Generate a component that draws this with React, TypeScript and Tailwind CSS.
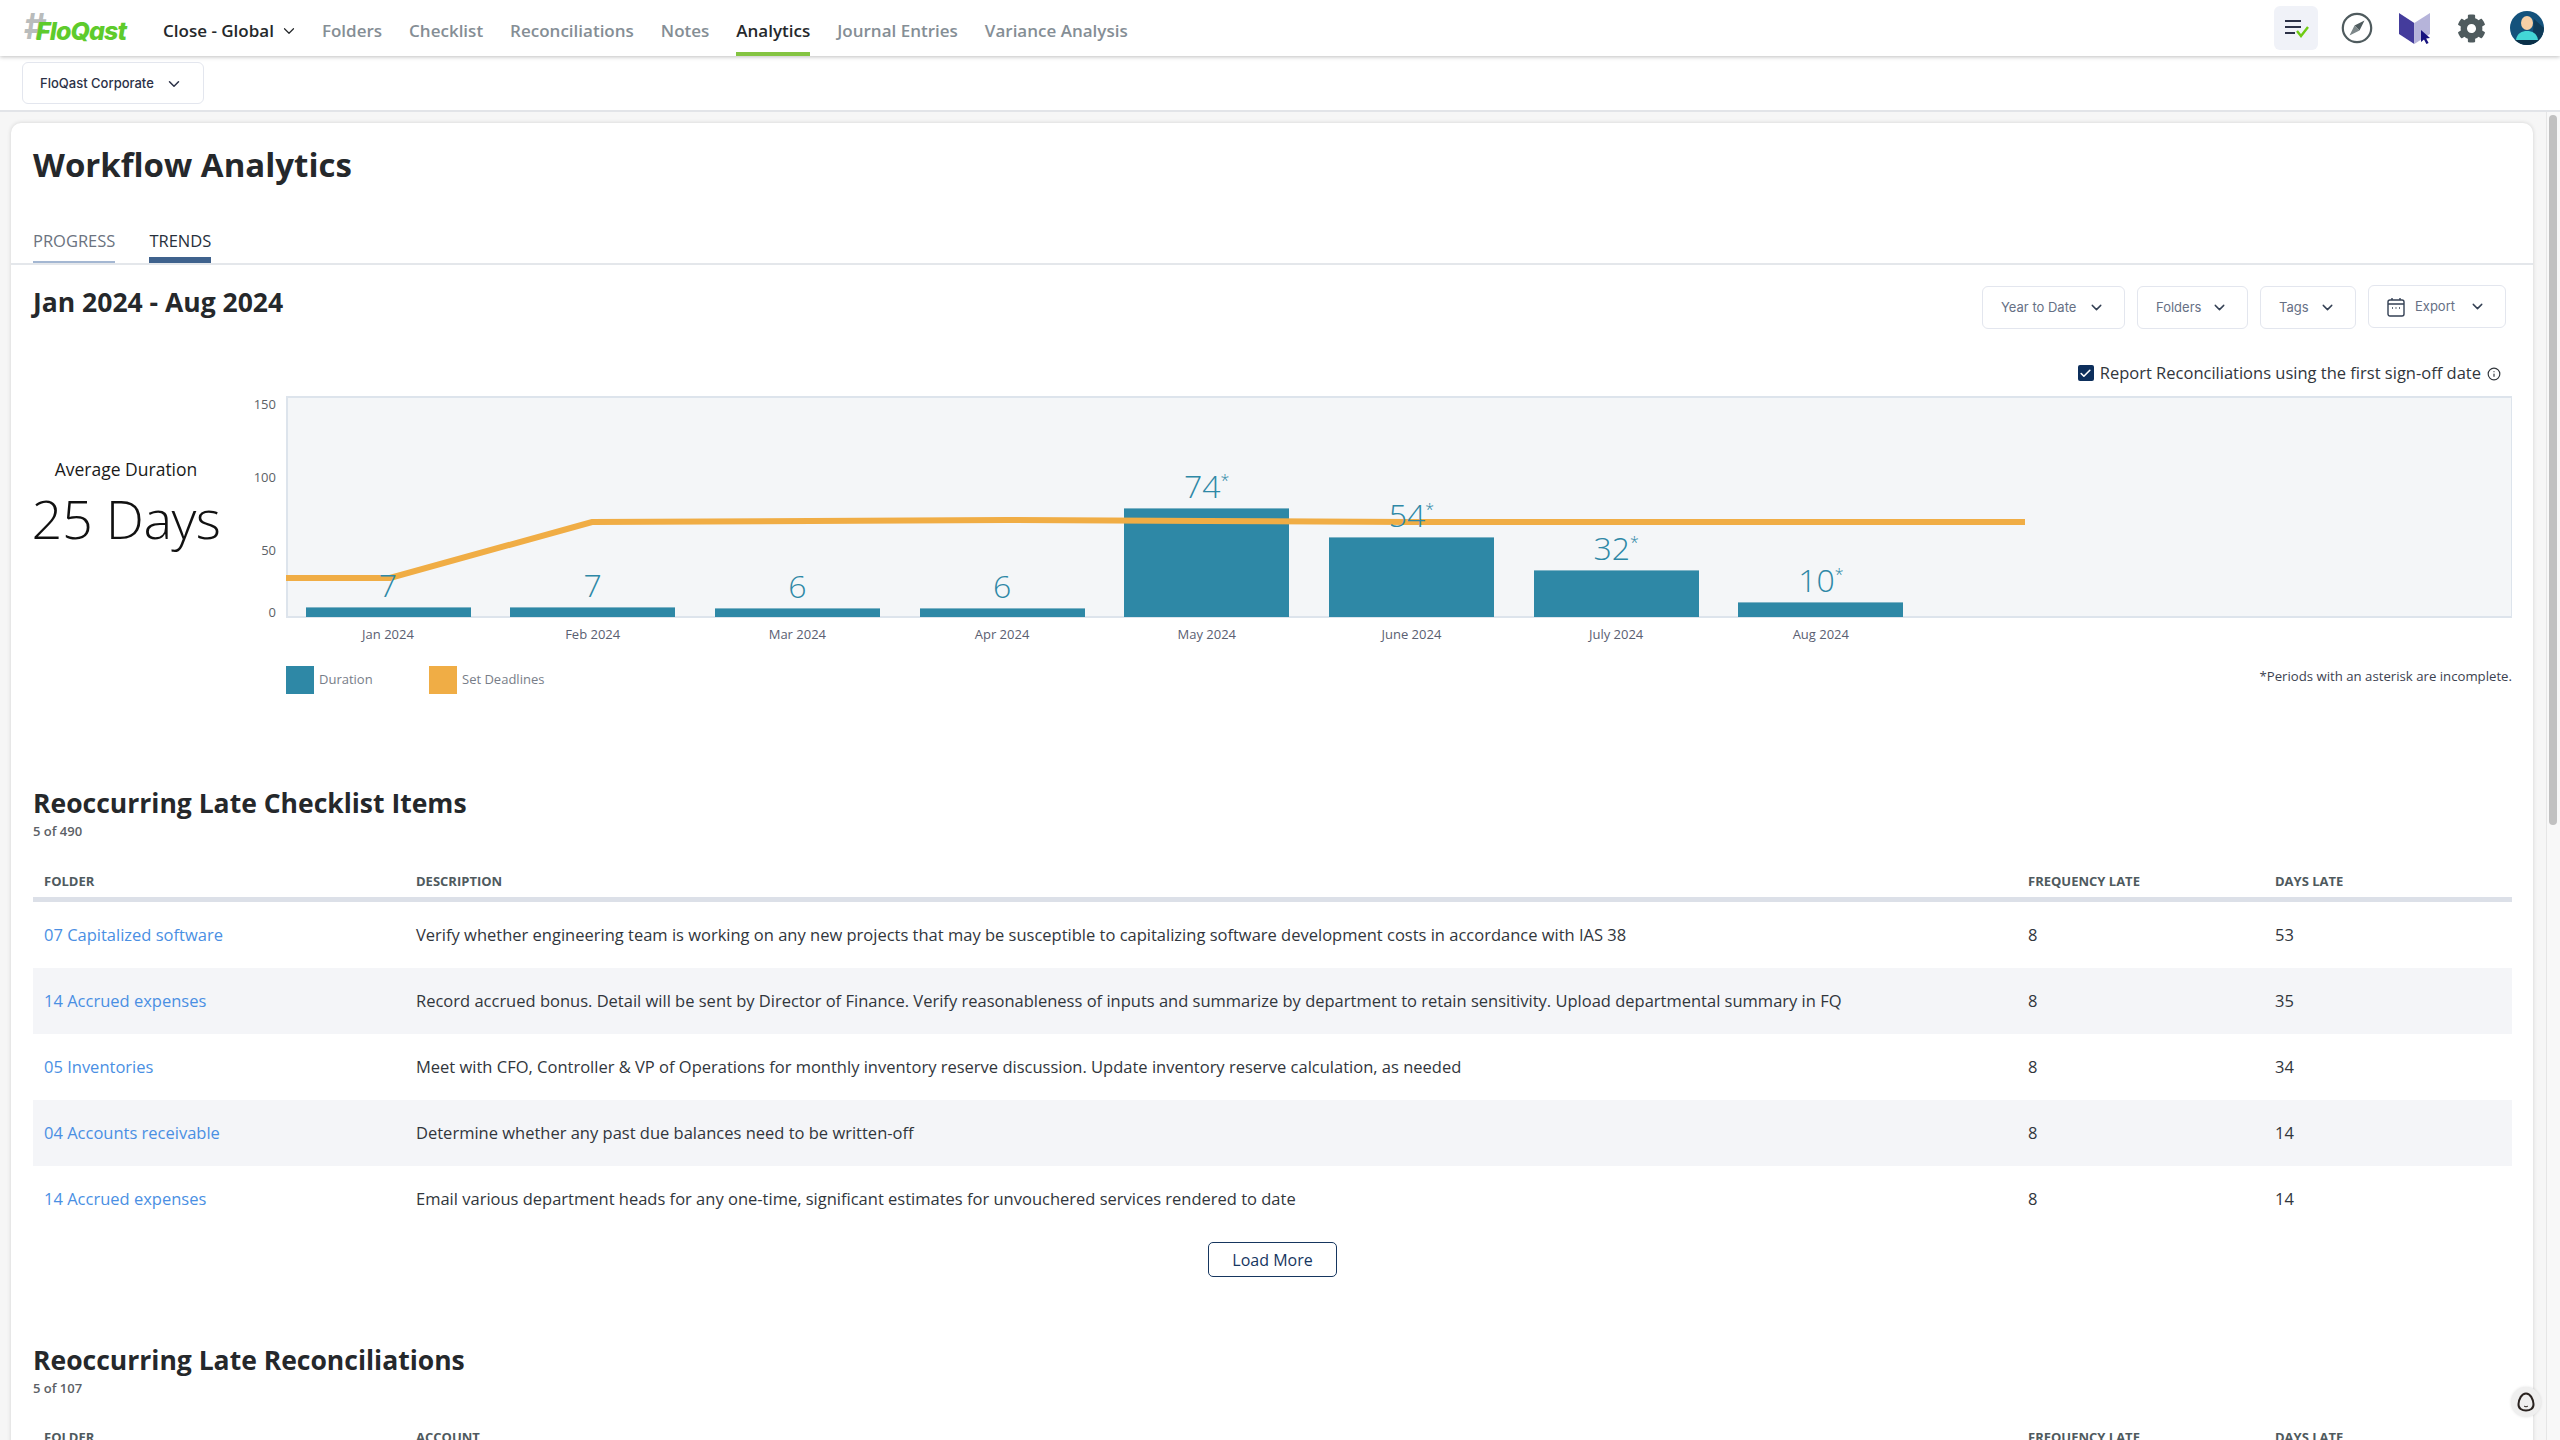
import React from 'react';
import { ChevronDown, Check, Info } from 'lucide-react';
import { FaCog } from 'react-icons/fa';

const navItems = ['Folders', 'Checklist', 'Reconciliations', 'Notes', 'Analytics', 'Journal Entries', 'Variance Analysis'];

const bars = [
  { month: 'Jan 2024', value: '7', height: 10 },
  { month: 'Feb 2024', value: '7', height: 10 },
  { month: 'Mar 2024', value: '6', height: 9 },
  { month: 'Apr 2024', value: '6', height: 9 },
  { month: 'May 2024', value: '74', height: 109, partial: true },
  { month: 'June 2024', value: '54', height: 80, partial: true },
  { month: 'July 2024', value: '32', height: 47, partial: true },
  { month: 'Aug 2024', value: '10', height: 15, partial: true },
];

const lateItems = [
  { folder: '07 Capitalized software', text: 'Verify whether engineering team is working on any new projects that may be susceptible to capitalizing software development costs in accordance with IAS 38', freq: 8, days: 53 },
  { folder: '14 Accrued expenses', text: 'Record accrued bonus. Detail will be sent by Director of Finance. Verify reasonableness of inputs and summarize by department to retain sensitivity. Upload departmental summary in FQ', freq: 8, days: 35 },
  { folder: '05 Inventories', text: 'Meet with CFO, Controller & VP of Operations for monthly inventory reserve discussion. Update inventory reserve calculation, as needed', freq: 8, days: 34 },
  { folder: '04 Accounts receivable', text: 'Determine whether any past due balances need to be written-off', freq: 8, days: 14 },
  { folder: '14 Accrued expenses', text: 'Email various department heads for any one-time, significant estimates for unvouchered services rendered to date', freq: 8, days: 14 },
];

const gridCols = 'grid grid-cols-[383px_1612px_247px_1fr]';

function FilterButton({ label, icon, width }: { label: string; icon?: React.ReactNode; width: string }) {
  return (
    <button className={`${width} h-[43px] flex items-center pl-[18px] bg-white border border-[#e3e6ee] rounded-[6px] font-['Inter'] text-[13px] text-[#667085]`}>
      {icon}
      <span className="flex-1 text-left">{label}</span>
      <ChevronDown className="mr-[19px] w-[17px] h-[17px] text-[#344054]" strokeWidth={2} />
    </button>
  );
}

function TableHead({ second }: { second: string }) {
  return (
    <div className={`${gridCols} text-[13px] leading-[16px] font-bold text-[#4f5a5e]`}>
      <div className="pl-[11px]">FOLDER</div>
      <div>{second}</div>
      <div>FREQUENCY LATE</div>
      <div>DAYS LATE</div>
    </div>
  );
}

function Logo() {
  return (
    <div className="relative w-[102px] h-[30px] ml-[24px] shrink-0 font-['Inter']">
      <span className="absolute left-0 top-[-5px] text-[35px] leading-[36px] font-bold text-[#b9bcbc]">#</span>
      <span className="absolute left-[12px] top-[3px] text-[25px] leading-[30px] font-extrabold italic tracking-[-0.9px] text-[#5ecb2c]">FloQast</span>
    </div>
  );
}

function CompassIcon() {
  return (
    <svg width="32" height="32" viewBox="0 0 32 32" fill="none">
      <circle cx="16" cy="16" r="14.2" stroke="#4f5b5e" strokeWidth="2.2" />
      <path d="M23.5 8.5 L18.5 18.5 L13.5 13.5 Z" fill="#4f5b5e" />
      <path d="M8.5 23.5 L13.5 13.5 L18.5 18.5 Z" fill="#7d8789" />
    </svg>
  );
}

function BookIcon() {
  return (
    <svg width="34" height="32" viewBox="0 0 34 32">
      <path d="M0 0 L15.3 10 L15.3 31 L0 21 Z" fill="#443c9c" />
      <path d="M15.3 10 L31 0 L31 21 L15.3 31 Z" fill="#b6b4da" />
      <path d="M22 17 L22 29 L25 26.4 L27.4 31 L29.6 30 L27.2 25.4 L31 25 Z" fill="#17127f" />
    </svg>
  );
}

function AvatarIcon() {
  return (
    <svg width="34" height="34" viewBox="0 0 34 34">
      <defs>
        <clipPath id="avatarClip">
          <circle cx="17" cy="17" r="17" />
        </clipPath>
      </defs>
      <g clipPath="url(#avatarClip)">
        <rect width="34" height="34" fill="#14527c" />
        <path d="M24 8 L34 17 L34 34 L22 34 Z" fill="#0f3b58" />
        <rect y="29" width="34" height="5" fill="#0a3048" />
        <path d="M6 29 C7 22 12 20 17 20 C22 20 27 22 28 29 Z" fill="#43d6d6" />
        <ellipse cx="17" cy="12" rx="6" ry="7" fill="#f7d0a6" />
      </g>
    </svg>
  );
}

function TopBar() {
  return (
    <header className="relative z-10 h-14 shrink-0 flex items-center bg-white shadow-[0_1px_4px_rgba(0,0,0,0.25)]">
      <Logo />
      <div className="ml-[37px] flex items-center h-full text-[17px] font-semibold">
        <div className="flex items-center pt-[6px] text-[#25282b]">
          Close - Global
          <ChevronDown className="ml-[6px] w-[18px] h-[18px]" strokeWidth={1.6} />
        </div>
        <nav className="ml-[24px] flex h-full gap-[27px] text-[#858e95]">
          {navItems.map((item) => (
            <a
              key={item}
              className={`h-full pt-[6px] flex items-center border-y-4 border-t-transparent ${
                item === 'Analytics' ? 'border-b-[#84c441] text-[#25282b]' : 'border-b-transparent'
              }`}
            >
              {item}
            </a>
          ))}
        </nav>
      </div>
      <div className="ml-auto mr-[16px] flex items-center">
        <div className="w-[44px] h-[44px] mr-[4px] rounded-[6px] bg-[#f0f2f8] flex items-center justify-center">
          <svg width="28" height="24" viewBox="0 0 28 24" fill="none">
            <path d="M3 5 H19 M3 11 H19 M3 17 H13" stroke="#2b3147" strokeWidth="2.2" />
            <path d="M15 15 L19 20 L26 11" stroke="#6fcb13" strokeWidth="2.4" />
          </svg>
        </div>
        <div className="ml-[19px]"><CompassIcon /></div>
        <div className="ml-[26px] mt-[2px]"><BookIcon /></div>
        <FaCog className="ml-[24px] w-[29px] h-[29px] text-[#4f5b5e]" />
        <div className="ml-[24px]"><AvatarIcon /></div>
      </div>
    </header>
  );
}

function TrendChart() {
  return (
    <div className="flex">
      <div className="w-[186px] pt-[61px] flex flex-col items-center shrink-0">
        <div className="text-[17.5px] leading-[24px] text-[#1a1a1a]">Average Duration</div>
        <div className="mt-[1px] text-[54px] leading-[72px] font-light tracking-[-0.5px] text-[#111] whitespace-nowrap">25 Days</div>
      </div>
      <div className="w-[57px] shrink-0 text-right text-[13px] leading-[16px] text-[#5c6166]">
        <div>150</div>
        <div className="mt-[57px]">100</div>
        <div className="mt-[57px]">50</div>
        <div className="mt-[46px]">0</div>
      </div>
      <div className="ml-[10px] flex-1">
        <div className="relative h-[222px] bg-[#f4f6f8] border-y-2 border-l-2 border-r border-[#dde4ec] flex items-end gap-[39.7px] pl-[17.5px]">
          {bars.map((bar) => (
            <div key={bar.month} className="w-[165px] flex flex-col items-center -mb-px">
              <div className="relative z-[2] h-[36px] mb-[4px] text-[32px] leading-[36px] font-light text-[#2e88a6] flex">
                {bar.value}
                {bar.partial && <span className="text-[16px] leading-[24px]">*</span>}
              </div>
              <div
                className="w-full bg-[#2e88a6] border-t border-[#7fb4c6]"
                style={{ height: bar.height }}
              />
            </div>
          ))}
          <svg className="absolute left-[-2px] top-[-2px] z-[1]" width="2226" height="222" fill="none">
            <path
              d="M0 182 L104 182 L306 126 L720 124 L920 125 L1124 126 L1739 126"
              stroke="#f0ad45"
              strokeWidth="6"
            />
          </svg>
        </div>
        <div className="h-[20px] mt-[6px] flex gap-[39.7px] pl-[19.5px] text-[13px] leading-[20px] font-medium text-[#5a6072]">
          {bars.map((bar) => (
            <div key={bar.month} className="w-[165px] text-center">{bar.month}</div>
          ))}
        </div>
        <div className="mt-[22px] h-[28px] flex items-center justify-between">
          <div className="flex items-center text-[13px] text-[#777d88]">
            <span className="w-[28px] h-[28px] bg-[#2e88a6]" />
            <span className="ml-[5px] w-[110px]">Duration</span>
            <span className="w-[28px] h-[28px] bg-[#f0ad45]" />
            <span className="ml-[5px]">Set Deadlines</span>
          </div>
          <div className="-mt-[6px] text-[13.2px] text-[#3c4250]">*Periods with an asterisk are incomplete.</div>
        </div>
      </div>
    </div>
  );
}

export default function App() {
  return (
    <div className="relative h-screen overflow-hidden flex flex-col bg-[#f6f6f6] font-['Open_Sans',sans-serif] text-[#2b2f33]">
      <TopBar />
      <div className="h-[56px] shrink-0 bg-white border-b-2 border-[#e2e4e8] pl-[22px] pt-[6px]">
        <button className="h-[42px] w-[182px] flex items-center pl-[17px] pt-px border border-[#e3e6ee] rounded-[6px] font-['Inter'] font-medium text-[13px] text-[#2b3147]">
          FloQast Corporate
          <ChevronDown className="ml-[11px] w-[18px] h-[18px]" strokeWidth={2} />
        </button>
      </div>

      <div className="flex-1 min-h-0 flex">
        <main className="flex-1 min-w-0 overflow-hidden pt-[11px] pl-[11px] pr-[13px]">
          <div className="bg-white rounded-t-[10px] shadow-[0_0_4px_rgba(0,0,0,0.15)]">
            <div className="h-[142px] pl-[22px] border-b-2 border-[#e4e7eb]">
              <h1 className="pt-[19px] text-[33px] leading-[46px] font-bold text-[#25282b]">Workflow Analytics</h1>
              <div className="mt-[27px] flex gap-[34px] text-[16.5px] font-medium">
                <div className="h-[48px] pt-[14px] leading-[24px] text-[#6b7380] border-b-2 border-[#a4b7d2]">PROGRESS</div>
                <div className="h-[48px] pt-[14px] leading-[24px] text-[#27303c] border-b-[6px] border-[#3f628d]">TRENDS</div>
              </div>
            </div>

            <section className="pl-[22px] pr-[21px]">
              <div className="pt-[21px] pr-[6px] flex justify-between items-start">
                <h2 className="text-[26.5px] leading-[32px] font-bold text-[#25282b]">Jan 2024 - Aug 2024</h2>
                <div className="flex gap-[12px]">
                  <FilterButton label="Year to Date" width="w-[143px]" />
                  <FilterButton label="Folders" width="w-[111px]" />
                  <FilterButton label="Tags" width="w-[96px]" />
                  <div className="-mt-px">
                    <FilterButton
                      label="Export"
                      width="w-[138px]"
                      icon={
                        <svg className="mr-[10px]" width="18" height="20" viewBox="0 0 18 20" fill="none" stroke="#344054" strokeWidth="1.4">
                          <rect x="1" y="3" width="16" height="16" rx="2" />
                          <path d="M1 7 H17 M5 1 V3 M13 1 V3" />
                          <path d="M5 11 H6 M8.5 11 H9.5 M12 11 H13" />
                        </svg>
                      }
                    />
                  </div>
                </div>
              </div>

              <div className="mt-[32px] h-[24px] pr-[11px] flex items-center justify-end text-[16.5px] text-[#31363c]">
                <span className="w-[16px] h-[16px] mr-[6px] rounded-[2px] bg-[#0d2f5c] flex items-center justify-center">
                  <Check className="w-[13px] h-[13px] text-white" strokeWidth={3} />
                </span>
                Report Reconciliations using the first sign-off date
                <Info className="ml-[6px] mt-[2px] w-[14px] h-[14px]" strokeWidth={2} />
              </div>

              <div className="mt-[11px]">
                <TrendChart />
              </div>

              <h2 className="mt-[91px] text-[26.5px] leading-[36px] font-bold text-[#25282b]">Reoccurring Late Checklist Items</h2>
              <div className="mt-[2px] text-[13px] leading-[16px] font-semibold text-[#5c6166]">5 of 490</div>
              <div className="mt-[34px] pb-[8px] border-b-[5px] border-[#dce0e8]">
                <TableHead second="DESCRIPTION" />
              </div>
              {lateItems.map((row, i) => (
                <div
                  key={i}
                  className={`${gridCols} h-[66px] items-center text-[16.5px] text-[#31363c] ${i % 2 === 1 ? 'bg-[#f4f5f8]' : ''}`}
                >
                  <a className="pl-[11px] text-[#4a8fe3]">{row.folder}</a>
                  <div className="whitespace-nowrap">{row.text}</div>
                  <div>{row.freq}</div>
                  <div>{row.days}</div>
                </div>
              ))}
              <div className="mt-[10px] flex justify-center">
                <button className="w-[129px] h-[35px] border border-[#16365f] rounded-[5px] text-[16px] font-medium text-[#16365f]">Load More</button>
              </div>

              <h2 className="mt-[65px] text-[26.5px] leading-[36px] font-bold text-[#25282b]">Reoccurring Late Reconciliations</h2>
              <div className="mt-[2px] text-[13px] leading-[16px] font-semibold text-[#5c6166]">5 of 107</div>
              <div className="mt-[33px]">
                <TableHead second="ACCOUNT" />
              </div>
            </section>
          </div>
        </main>
        <aside className="w-[14px] shrink-0 bg-[#f8f8f8] border-l border-[#e6e6e6] pt-[3px] pl-[2px]">
          <div className="w-[8px] h-[710px] rounded-full bg-[#c1c1c1]" />
        </aside>
      </div>

      <div className="absolute left-[2511px] top-[1387px] w-[30px] h-[30px] rounded-full bg-[#efefef] flex items-center justify-center shadow-[0_0_3px_rgba(0,0,0,0.12)]">
        <svg width="22" height="22" viewBox="0 0 22 22" fill="none" stroke="#2a2320" strokeWidth="2">
          <path d="M11 2.5 C15.5 2.5 18 8 18.5 13 C18.8 17.5 15 19.5 11 19.5 C7 19.5 3.2 17.5 3.5 13 C4 8 6.5 2.5 11 2.5 Z" />
          <path d="M9 15 C10 16 12 16 13 15" strokeWidth="1" />
        </svg>
      </div>
    </div>
  );
}
